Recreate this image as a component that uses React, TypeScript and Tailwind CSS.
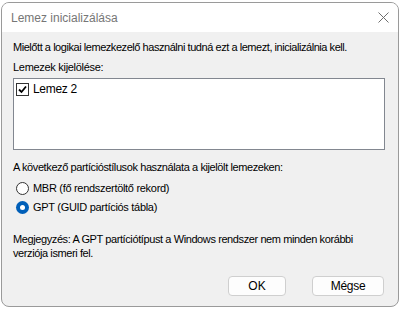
import { useState } from "react";

const CloseIcon = () => (
    <svg width="11" height="11" viewBox="0 0 11 11" className="block">
        <path d="M0.5 0.5 L10.5 10.5 M10.5 0.5 L0.5 10.5" stroke="#6e6e6e" strokeWidth="1" fill="none" />
    </svg>
);

export default function App() {
    const [style, setStyle] = useState<"mbr" | "gpt">("gpt");
    const [checked, setChecked] = useState(true);

    return (
        <div className="w-[401px] h-[309px] bg-white pl-[1px] pt-[2px] font-['Liberation_Sans',Arial,sans-serif] text-[11px] text-black">
            <div className="w-[398px] h-[305px] rounded-[8px] border border-[#9a9a9a] bg-[#f0f0f0] overflow-hidden flex flex-col">
                {/* title bar */}
                <div className="h-[29px] bg-white flex items-center justify-between pl-[9px] pr-[9px] shrink-0">
                    <span className="text-[#767676] text-[12px]">Lemez inicializálása</span>
                    <CloseIcon />
                </div>

                <div className="flex flex-col pl-[11px] pr-[13px] pt-[8px]">
                    <p className="leading-[14px] tracking-[-0.45px] whitespace-nowrap">Mielőtt a logikai lemezkezelő használni tudná ezt a lemezt, inicializálnia kell.</p>
                    <p className="leading-[14px] mt-[6px] tracking-[-0.3px]">Lemezek kijelölése:</p>
                    <div className="mt-[4px] h-[72px] w-[372px] bg-white border border-[#828790] px-[2px] pt-[3px]">
                        <label className="flex items-center gap-[4px] cursor-default" onClick={() => setChecked(!checked)}>
                            <span className="flex items-center justify-center w-[13px] h-[13px] border border-[#333] bg-white">
                                {checked && (
                                    <svg width="9" height="9" viewBox="0 0 9 9">
                                        <path d="M1 4.5 L3.5 7 L8 1.5" stroke="#000" strokeWidth="1.8" fill="none" />
                                    </svg>
                                )}
                            </span>
                            <span className="leading-[14px] text-[12px] tracking-[-0.3px]">Lemez 2</span>
                        </label>
                    </div>

                    <p className="leading-[14px] mt-[10px] tracking-[-0.4px] whitespace-nowrap">A következő partícióstílusok használata a kijelölt lemezeken:</p>
                    <div className="flex flex-col gap-[5px] mt-[7px] pl-[3px]">
                        <label className="flex items-center gap-[4px] h-[14px]" onClick={() => setStyle("mbr")}>
                            <span className="flex items-center justify-center w-[13px] h-[13px] rounded-full border border-[#333] bg-white">
                                {style === "mbr" && <span className="w-[7px] h-[7px] rounded-full bg-[#005fb8]" />}
                            </span>
                            <span className="leading-[14px] tracking-[-0.3px]">MBR (fő rendszertöltő rekord)</span>
                        </label>
                        <label className="flex items-center gap-[4px] h-[14px]" onClick={() => setStyle("gpt")}>
                            <span
                                className={
                                    style === "gpt"
                                        ? "flex items-center justify-center w-[13px] h-[13px] rounded-full bg-[#005fb8]"
                                        : "flex items-center justify-center w-[13px] h-[13px] rounded-full border border-[#333] bg-white"
                                }
                            >
                                {style === "gpt" && <span className="w-[5px] h-[5px] rounded-full bg-white" />}
                            </span>
                            <span className="leading-[14px] tracking-[-0.3px]">GPT (GUID partíciós tábla)</span>
                        </label>
                    </div>

                    <p className="leading-[14px] mt-[18px] w-[366px] tracking-[-0.4px]">
                        Megjegyzés: A GPT partíciótípust a Windows rendszer nem minden korábbi verziója ismeri fel.
                    </p>

                    <div className="flex justify-end gap-[26px] mt-[16px] pr-[1px]">
                        <button className="w-[58px] h-[20px] rounded-[4px] border border-[#cfcfcf] bg-[#fdfdfd] leading-[14px] text-[12px]">OK</button>
                        <button className="w-[72px] h-[20px] rounded-[4px] border border-[#cfcfcf] bg-[#fdfdfd] leading-[14px] text-[12px] tracking-[-0.3px]">Mégse</button>
                    </div>
                </div>
            </div>
        </div>
    );
}
